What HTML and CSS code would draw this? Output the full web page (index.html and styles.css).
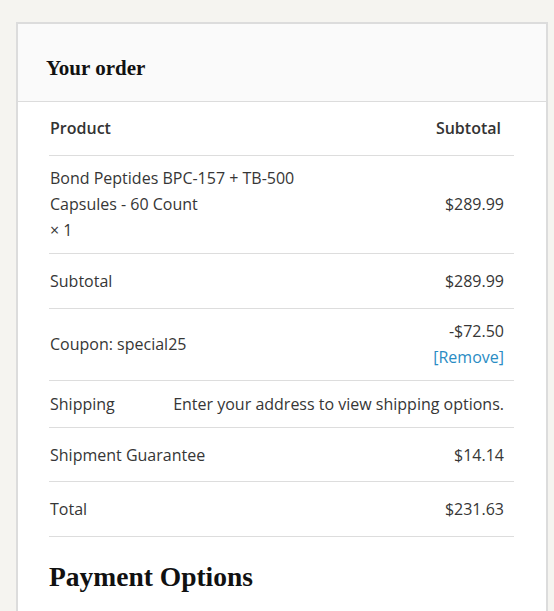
FILE: index.html
```html
<!DOCTYPE html>
<html>
<head>
    <title>Checkout - Your order</title>
    <link rel="stylesheet" href="styles.css">
</head>
<body>
    <div class="order-card">
        <div class="order-header">
            <h3>Your order</h3>
        </div>
        <div class="order-body">
            <table class="order-table">
                <thead>
                    <tr class="row-head">
                        <th class="col-name">Product</th>
                        <th class="col-total">Subtotal</th>
                    </tr>
                </thead>
                <tbody>
                    <tr class="row-tight">
                        <td class="col-name product-name">Bond Peptides BPC-157 + TB-500<br>Capsules - 60 Count<br>&times; 1</td>
                        <td class="col-total">$289.99</td>
                    </tr>
                </tbody>
                <tfoot>
                    <tr>
                        <td class="col-name">Subtotal</td>
                        <td class="col-total">$289.99</td>
                    </tr>
                    <tr class="row-tight">
                        <td class="col-name">Coupon: special25</td>
                        <td class="col-total">-$72.50<br><a href="#" class="remove-link">[Remove]</a></td>
                    </tr>
                    <tr class="row-shipping">
                        <td colspan="2">
                            <div class="shipping-line">
                                <span>Shipping</span>
                                <span>Enter your address to view shipping options.</span>
                            </div>
                        </td>
                    </tr>
                    <tr class="row-fee">
                        <td class="col-name">Shipment Guarantee</td>
                        <td class="col-total">$14.14</td>
                    </tr>
                    <tr>
                        <td class="col-name">Total</td>
                        <td class="col-total">$231.63</td>
                    </tr>
                </tfoot>
            </table>

            <h2 class="payment-title">Payment Options</h2>
        </div>
    </div>
</body>
</html>
```

FILE: styles.css
```css
/* Global styles */
body {
    margin: 0;
    padding: 22px 6px 0 16px;
    background-color: #f5f4f0;
    font-family: "Open Sans", "Liberation Sans", sans-serif;
    font-size: 16px;
    line-height: 26px;
    color: #363636;
    overflow: hidden;
}

/* Card */
.order-card {
    background-color: #fff;
    border: 2px solid #dcdcdc;
    border-bottom: none;
    min-height: 600px;
}

.order-header {
    background-color: #fafafa;
    border-bottom: 1px solid #dcdcdc;
    padding: 10px 28px 0;
    height: 67px;
    display: flex;
    align-items: center;
}

.order-header h3 {
    margin: 0;
    font-family: "Liberation Serif", "DejaVu Serif", serif;
    font-size: 21px;
    font-weight: bold;
    color: #111;
}

.order-body {
    padding: 0 32px 0 31px;
}

/* Table styles */
.order-table {
    width: 100%;
    border-collapse: collapse;
}

.order-table th,
.order-table td {
    padding: 14px 10px 14px 1px;
    border-bottom: 1px solid #dddddd;
    vertical-align: middle;
}

.order-table th {
    font-weight: 600;
    color: #333;
}

.order-table .row-head th {
    padding-top: 13px;
    padding-right: 13px;
}

.order-table .row-tight td {
    padding-top: 9px;
    padding-bottom: 10px;
}

.order-table .row-shipping td {
    padding-top: 10px;
    padding-bottom: 10px;
}

.order-table .row-fee td {
    padding-bottom: 13px;
}

.col-name {
    text-align: left;
}

.col-total {
    text-align: right;
}

.product-name {
    white-space: nowrap;
}

.shipping-line {
    display: flex;
    justify-content: space-between;
}

.remove-link {
    color: #2a8cc4;
    text-decoration: none;
}

/* Payment heading */
.payment-title {
    margin: 24px 0 0 0;
    font-family: "Liberation Serif", "DejaVu Serif", serif;
    font-size: 27.5px;
    line-height: 32px;
    font-weight: bold;
    color: #111;
}
```
